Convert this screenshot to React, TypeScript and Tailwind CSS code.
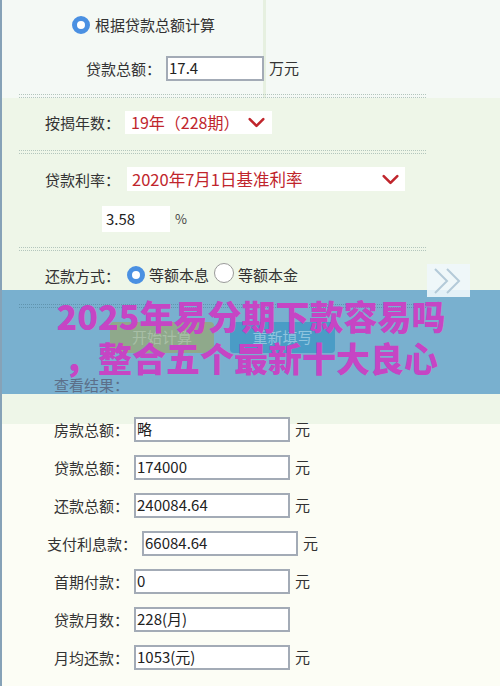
import type { ReactNode } from 'react'

const font = "font-['Noto_Sans_CJK_SC','Noto_Sans',sans-serif]"

function Radio({ checked }: { checked?: boolean }) {
  return checked ? (
    <span className="inline-block w-[18px] h-[18px] rounded-full border-[5px] border-[#4a90e2] bg-white" />
  ) : (
    <span className="inline-block w-[20px] h-[20px] rounded-full border border-[#9a9a9a] bg-white" />
  )
}

function Chevron({ className = '' }: { className?: string }) {
  return (
    <svg viewBox="0 0 20 12" className={className} fill="none" stroke="#c0252c" strokeWidth="3" strokeLinecap="round" strokeLinejoin="round">
      <path d="M2 2 L10 10 L18 2" />
    </svg>
  )
}

function Dots({ tone = 'border-[#b3c6bd]', className = '' }: { tone?: string; className?: string }) {
  return (
    <div className={`ml-[17px] w-[407px] flex flex-col gap-[2px] ${className}`}>
      <div className={`border-t border-dotted ${tone}`} />
      <div className={`border-t border-dotted ${tone}`} />
    </div>
  )
}

function Label({ children, w = 'w-[80px]' }: { children: ReactNode; w?: string }) {
  return <span className={`${w} text-[15px] text-[#333] leading-none`}>{children}</span>
}

function ResultRow({ label, value, unit = true, wide }: { label: string; value: string; unit?: boolean; wide?: boolean }) {
  return (
    <div className={`h-[24px] flex items-center ${wide ? 'pl-[45px]' : 'pl-[52px]'}`}>
      <Label w={wide ? 'w-[95px]' : 'w-[80px]'}>{label}</Label>
      <div className="w-[156px] h-[25px] border-2 border-[#a3abb6] bg-white flex items-center pl-[1px] text-[15px] text-[#222]">
        {value}
      </div>
      {unit && <span className="ml-[5px] text-[15px] text-[#333]">元</span>}
    </div>
  )
}

export default function App() {
  return (
    <div className={`relative w-[500px] h-[686px] overflow-hidden border-l-2 border-[#86a2b7] bg-[#f4f9f5] ${font}`}>
      {/* faint column guide */}
      <div className="absolute left-[261px] top-0 bottom-0 w-[3px] bg-[#e6f0e0]" />

      <div className="relative">
        {/* amount mode */}
        <div className="pt-[13px] h-[37px] flex items-center pl-[70px] gap-[5px]">
          <Radio checked />
          <span className="text-[15px] text-[#333]">根据贷款总额计算</span>
        </div>
        <div className="mt-[19px] h-[24px] flex items-center pl-[84px]">
          <Label>贷款总额：</Label>
          <div className="w-[98px] h-[25px] border-2 border-[#a3abb6] bg-white flex items-center pl-[1px] text-[15px] text-[#222]">
            17.4
          </div>
          <span className="ml-[5px] text-[15px] text-[#333]">万元</span>
        </div>
        <Dots className="mt-[14px]" />

        <div className="bg-[#eef6e8]">
          {/* loan years */}
          <div className="pt-[12px] h-[36px] flex items-center pl-[43px]">
            <Label w="w-[80px]">按揭年数：</Label>
            <div className="w-[147px] h-[23px] bg-white flex items-center pl-[6px] gap-[9px]">
              <span className="text-[16px] text-[#c0252c]">19年（228期）</span>
              <Chevron className="w-[17px] h-[11px]" />
            </div>
          </div>
          <Dots className="mt-[16px]" />

          {/* rate */}
          <div className="mt-[13px] h-[24px] flex items-center pl-[43px]">
            <Label w="w-[82px]">贷款利率：</Label>
            <div className="w-[278px] h-[24px] bg-white flex items-center pl-[5px]">
              <span className="text-[16.5px] text-[#c0252c]">2020年7月1日基准利率</span>
              <Chevron className="ml-auto mr-[6px] w-[17px] h-[11px]" />
            </div>
          </div>
          <div className="mt-[15px] h-[26px] flex items-center pl-[100px]">
            <div className="w-[68px] h-[26px] bg-white flex items-center pl-[4px] text-[15px] text-[#222]">3.58</div>
            <span className="ml-[5px] text-[13px] text-[#444]">%</span>
          </div>
          <Dots className="mt-[15px]" />

          {/* repayment type */}
          <div className="h-[39px] pt-[9px] flex items-center pl-[43px]">
            <Label w="w-[82px]">还款方式：</Label>
            <Radio checked />
            <span className="ml-[4px] text-[15px] text-[#333]">等额本息</span>
            <span className="ml-[5px]"><Radio /></span>
            <span className="ml-[4px] text-[15px] text-[#333]">等额本金</span>
          </div>
        </div>

        {/* action band */}
        <div className="relative h-[104px] bg-[#79b0cf]">
          <Dots tone="border-[#6094ae]" className="pt-[14px]" />
          <div className="mt-[14px] flex gap-[16px] pl-[108px]">
            <div className="w-[104px] h-[31px] rounded-[4px] bg-[#8fa98b] flex items-center justify-center text-[15px] text-[#a8bfa6]">
              开始计算
            </div>
            <div className="w-[105px] h-[31px] rounded-[4px] bg-[#4a9cc6] flex items-center justify-center text-[15px] text-[#8fc5df]">
              重新填写
            </div>
          </div>
          <div className="mt-[24px] pl-[52px] text-[15px] leading-none text-[#5c6f89]">查看结果：</div>

          <div className="absolute inset-x-0 top-[5px] flex flex-col items-center text-[34px] leading-[42px] font-black text-[#c645c4]">
            <span>2025年易分期下款容易吗</span>
            <span>，整合五个最新十大良心</span>
          </div>
        </div>

        {/* results */}
        <div className="bg-[linear-gradient(#eef6e8_0_30px,#fcfdf5_30px)] pt-[23px] pb-[20px] flex flex-col gap-[14px]">
          <ResultRow label="房款总额：" value="略" />
          <ResultRow label="贷款总额：" value="174000" />
          <ResultRow label="还款总额：" value="240084.64" />
          <ResultRow label="支付利息款：" value="66084.64" wide />
          <ResultRow label="首期付款：" value="0" />
          <ResultRow label="贷款月数：" value="228(月)" unit={false} />
          <ResultRow label="月均还款：" value="1053(元)" />
        </div>
      </div>

      {/* next-page arrows, sitting over the band edge */}
      <div className="absolute left-[425px] top-[264px] w-[43px] h-[33px] bg-[#eef7fb]/90 flex items-center justify-center">
        <svg viewBox="0 0 40 30" className="w-[40px] h-[30px]" fill="none" stroke="#b4cad8" strokeWidth="2">
          <path d="M6 3 L18 15 L6 27" />
          <path d="M18 3 L30 15 L18 27" />
        </svg>
      </div>
    </div>
  )
}
